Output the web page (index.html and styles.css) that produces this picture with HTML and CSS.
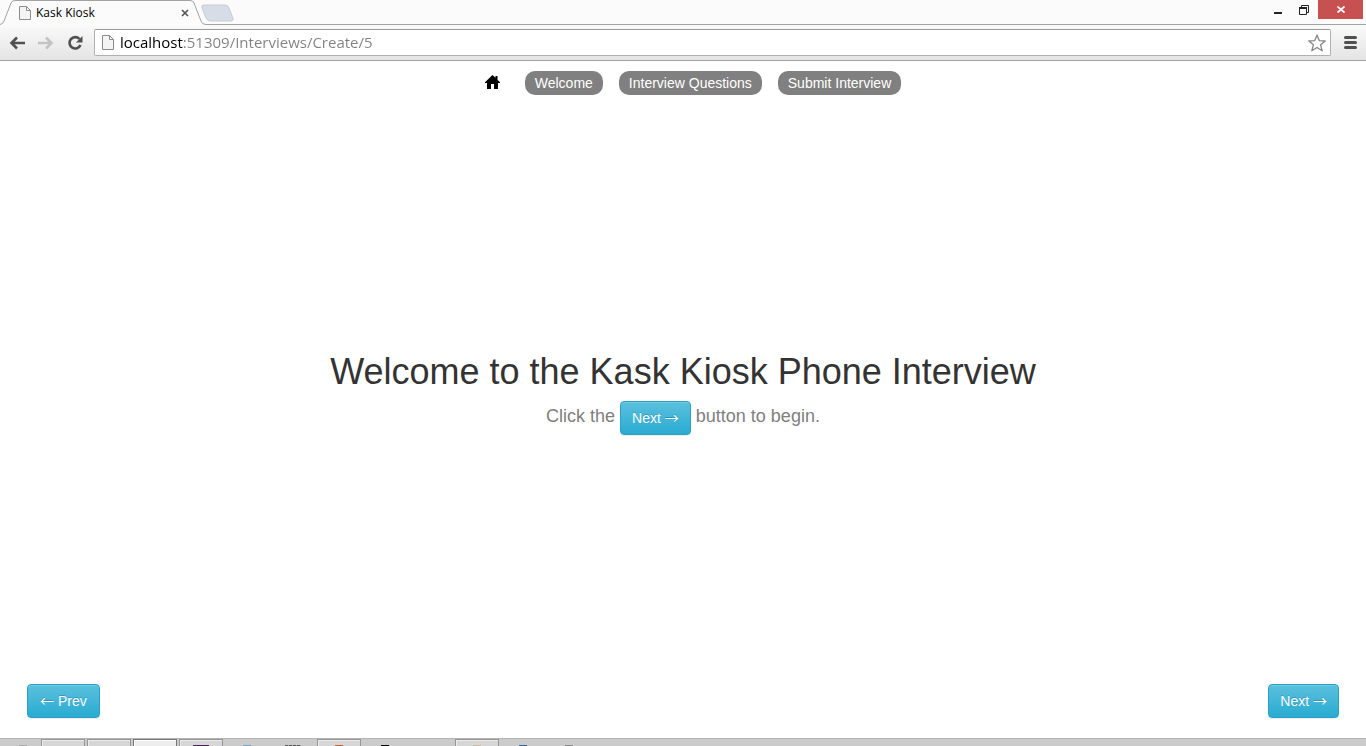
FILE: index.html
```html
<!DOCTYPE html>
<html lang="en">
<head>
<meta charset="utf-8">
<title>Kask Kiosk</title>
<link rel="stylesheet" href="styles.css">
</head>
<body>
<header class="browser">
  <div class="tabstrip">
    <svg class="tab-shape" width="236" height="25" viewBox="0 0 236 25" aria-hidden="true">
      <path d="M202 8Q201 5 204 5H225Q228 5 229 8L233 18Q234 21 230 21H211Q207 21 206 18Z" fill="#d7dde6" stroke="#c9ccd1"/>
      <path d="M0 25V24.500Q3 24 4 21L11 3Q12 .500 15 .500H190Q193 .500 194 3L201 21Q202 24.500 206 24.500V25Z" fill="#fbfbfb"/>
      <path d="M0 24.500Q3 24 4 21L11 3Q12 .500 15 .500H190Q193 .500 194 3L201 21Q202 24.500 206 24.500H236" fill="none" stroke="#a3a3a3"/>
    </svg>
    <div class="tab">
      <svg width="12" height="14" viewBox="0 0 12 14" aria-hidden="true"><path d="M.5.5H7.500L11.500 4.500V13.500H.5ZM7.500.5V4.500H11.500" fill="#f4f4f4" stroke="#8c8c8c"/></svg>
      <span class="tab-title">Kask Kiosk</span>
      <button class="plain tab-close" aria-label="Close tab"><svg width="8" height="8" viewBox="0 0 8 8"><path d="M1 1L7 7M7 1L1 7" stroke="#555" stroke-width="1.700"/></svg></button>
    </div>
    <div class="window-controls">
      <button class="plain control" aria-label="Minimize"><svg width="10" height="10" viewBox="0 0 10 10"><path d="M1 7H9V9H1Z" fill="#222"/></svg></button>
      <button class="plain control" aria-label="Restore"><svg width="10" height="10" viewBox="0 0 10 10"><path d="M2.500 2V.5H9.500V7.500H8" fill="none" stroke="#222"/><path d="M.5 3V9.500H7.500V3" fill="none" stroke="#222"/><path d="M0 2H8V4H0Z" fill="#222"/></svg></button>
      <button class="plain control close" aria-label="Close window"><svg width="8" height="7" viewBox="0 0 8 7"><path d="M.5.5L7.500 6.500M7.500.5L.5 6.500" stroke="#fff" stroke-width="1.700"/></svg></button>
    </div>
  </div>
  <div class="toolbar">
    <button class="plain" aria-label="Back"><svg width="16" height="14" viewBox="0 0 16 14"><path d="M8 1.500L2.500 7L8 12.500M2.500 7H16" fill="none" stroke="#505050" stroke-width="2.600"/></svg></button>
    <button class="plain" aria-label="Forward" disabled><svg width="16" height="14" viewBox="0 0 16 14"><path d="M8 1.500L13.500 7L8 12.500M13.500 7H0" fill="none" stroke="#c3c3c3" stroke-width="2.600"/></svg></button>
    <button class="plain" aria-label="Reload"><svg width="16" height="16" viewBox="0 0 16 16"><path d="M12.500 4A5.700 5.700 0 1 0 13.500 10" fill="none" stroke="#505050" stroke-width="2.600"/><path d="M15.500 1V7.500H9Z" fill="#505050"/></svg></button>
    <div class="omnibox">
      <svg width="12" height="15" viewBox="0 0 12 15" aria-hidden="true"><path d="M.5.5H7.500L11.500 4.500V14.500H.5ZM7.500.5V4.500H11.500" fill="#f4f4f4" stroke="#8c8c8c"/></svg>
      <input class="address" type="text" aria-label="Address" value="localhost:51309/Interviews/Create/5">
      <button class="plain" aria-label="Bookmark this page"><svg width="18" height="18" viewBox="0 0 18 18"><path d="M9 1L11.200 6.600L17.200 7L12.600 10.800L14.200 16.800L9 13.500L3.800 16.800L5.400 10.800L.8 7L6.800 6.600Z" fill="#fff" stroke="#868686" stroke-width="1.300" stroke-linejoin="round"/></svg></button>
    </div>
    <button class="plain" aria-label="Menu"><svg width="13" height="13" viewBox="0 0 13 13"><path d="M1.500 1.500H11.500M1.500 6.500H11.500M1.500 11.500H11.500" stroke="#505050" stroke-width="3" stroke-linecap="round"/></svg></button>
  </div>
</header>

<main class="page">
  <nav class="steps">
    <a class="home" href="#" aria-label="Home"><svg width="15" height="14" viewBox="0 0 15 14"><path d="M7.500 0L10.500 2.800V1H12.500V4.700L15 7.200V8H13V14H9V9H6V14H2V8H0V7.200Z" fill="#000"/></svg></a>
    <a class="pill" href="#">Welcome</a>
    <a class="pill" href="#">Interview Questions</a>
    <a class="pill" href="#">Submit Interview</a>
  </nav>
  <section class="welcome">
    <h1 class="title">Welcome to the Kask Kiosk Phone Interview</h1>
    <p class="hint">Click the <button class="btn next">Next <span class="arrow">→</span></button> button to begin.</p>
  </section>
  <div class="pager">
    <button class="btn"><span class="arrow">←</span> Prev</button>
    <button class="btn next">Next <span class="arrow">→</span></button>
  </div>
</main>

<footer class="taskbar">
  <span class="task edge"><i class="mark silver"></i></span>
  <span class="task open"></span>
  <span class="task open"></span>
  <span class="task open active"></span>
  <span class="task open"><i class="mark purple"></i></span>
  <span class="task"><i class="mark sky"></i></span>
  <span class="task"><i class="mark bars"></i></span>
  <span class="task open"><i class="mark orange"></i></span>
  <span class="task"><i class="mark black"></i></span>
  <span class="task"></span>
  <span class="task open"><i class="mark tan"></i></span>
  <span class="task"><i class="mark blue"></i></span>
  <span class="task"><i class="mark gray"></i></span>
</footer>
</body>
</html>
```
FILE: styles.css
```css
* { box-sizing: border-box; }

body {
  margin: 0;
  height: 100vh;
  display: flex;
  flex-direction: column;
  overflow: hidden;
  background: #fff;
  font-family: "Liberation Sans", Arial, sans-serif;
  font-size: 14px;
  line-height: 20px;
}

.plain {
  display: flex;
  align-items: center;
  justify-content: center;
  padding: 0;
  border: 0;
  background: none;
}

/* Browser chrome */
.browser {
  font-family: "Open Sans", "Noto Sans", sans-serif;
  border-bottom: 1px solid #a3a3a3;
}

.tabstrip {
  position: relative;
  height: 25px;
  display: flex;
  justify-content: space-between;
  background: #fbfbfb;
  border-bottom: 1px solid #a3a3a3;
}

.tab-shape {
  position: absolute;
  left: 0;
  top: 0;
}

.tab {
  position: relative;
  width: 189px;
  height: 24px;
  padding: 2px 0 0 19px;
  display: flex;
  align-items: center;
  gap: 5px;
}

.tab-title {
  flex: 1;
  font-size: 12px;
  line-height: 16px;
  color: #000;
}

.window-controls {
  display: flex;
  padding-right: 3px;
}

.control {
  width: 26px;
  height: 19px;
}

.close {
  width: 45px;
  margin-left: 1px;
  background: #c75050;
}

.toolbar {
  height: 35px;
  padding: 0 9px;
  display: flex;
  align-items: center;
  gap: 13px;
  background: linear-gradient(#fafafa, #e4e4e4);
}

.omnibox {
  flex: 1;
  height: 27px;
  padding: 0 4px 0 7px;
  margin-left: -2px;
  display: flex;
  align-items: center;
  gap: 6px;
  background: #fff;
  border: 1px solid #b0b0b0;
  border-top-color: #999;
  border-radius: 2px;
}

.address {
  flex: 1;
  min-width: 0;
  padding: 0 0 2px;
  border: 0;
  outline: 0;
  font-family: inherit;
  font-size: 15px;
  line-height: 22px;
  color: transparent;
  caret-color: #000;
  /* host in black, the rest of the URL in gray */
  background: linear-gradient(90deg, #000 63px, #808080 63px);
  -webkit-background-clip: text;
  background-clip: text;
}

/* Page */
.page {
  flex: 1;
  display: flex;
  flex-direction: column;
  justify-content: space-between;
}

.steps {
  display: flex;
  justify-content: center;
  align-items: center;
  gap: 16px;
  padding: 10px 0 0 20px;
}

.home {
  display: flex;
  margin-right: 9px;
  padding-bottom: 2px;
}

.pill {
  padding: 2px 10px;
  border-radius: 10px;
  background: #808080;
  color: #fff;
  text-decoration: none;
}

.welcome {
  padding-top: 8px;
  text-align: center;
}

.title {
  margin: 0 0 7px;
  font-size: 36px;
  line-height: 40px;
  font-weight: 400;
  color: #333;
}

.hint {
  margin: 0;
  font-size: 18px;
  line-height: 34px;
  color: #808080;
}

.btn {
  height: 34px;
  padding: 0 12px;
  border: 1px solid #28a1c5;
  border-radius: 4px;
  background: linear-gradient(#5bc0de, #2aabd2);
  box-shadow: inset 0 1px 0 rgba(255, 255, 255, 0.15), 0 1px 1px rgba(0, 0, 0, 0.075);
  color: #fff;
  font-family: inherit;
  font-size: 14px;
  line-height: 20px;
  text-shadow: 0 -1px 0 rgba(0, 0, 0, 0.2);
}

.next { padding: 0 11px; }

.arrow {
  font-family: "Noto Sans CJK JP", sans-serif;
  line-height: 1;
}

.hint .btn { vertical-align: middle; }

.pager {
  display: flex;
  justify-content: space-between;
  padding: 0 27px 20px;
}

/* Taskbar */
.taskbar {
  height: 8px;
  display: flex;
  gap: 2px;
  background: #cbcbcb;
  border-top: 1px solid #b4b4b4;
  overflow: hidden;
}

.task {
  flex: none;
  width: 44px;
  height: 7px;
  display: flex;
  align-items: flex-end;
  justify-content: center;
}

.edge {
  width: 39px;
  padding-left: 6px;
}

.open {
  background: #d6d6d6;
  border: 1px solid #969696;
  border-bottom: 0;
  box-shadow: inset 1px 1px 0 #ececec;
}

.active {
  background: #ededed;
  border-color: #777;
  box-shadow: inset 1px 1px 0 #fff;
}

.mark {
  width: 8px;
  height: 1px;
}

.silver { background: #aaa; }
.purple { width: 16px; background: #4b2067; }
.sky { background: #6ba6cf; }
.bars { width: 16px; background: repeating-linear-gradient(90deg, #555 0 3px, #aaa 3px 4px); }
.orange { background: #d0592b; }
.black { background: #000; }
.tan { background: #cfc08f; }
.blue { background: #2a62a8; }
.gray { background: #888; }
```
